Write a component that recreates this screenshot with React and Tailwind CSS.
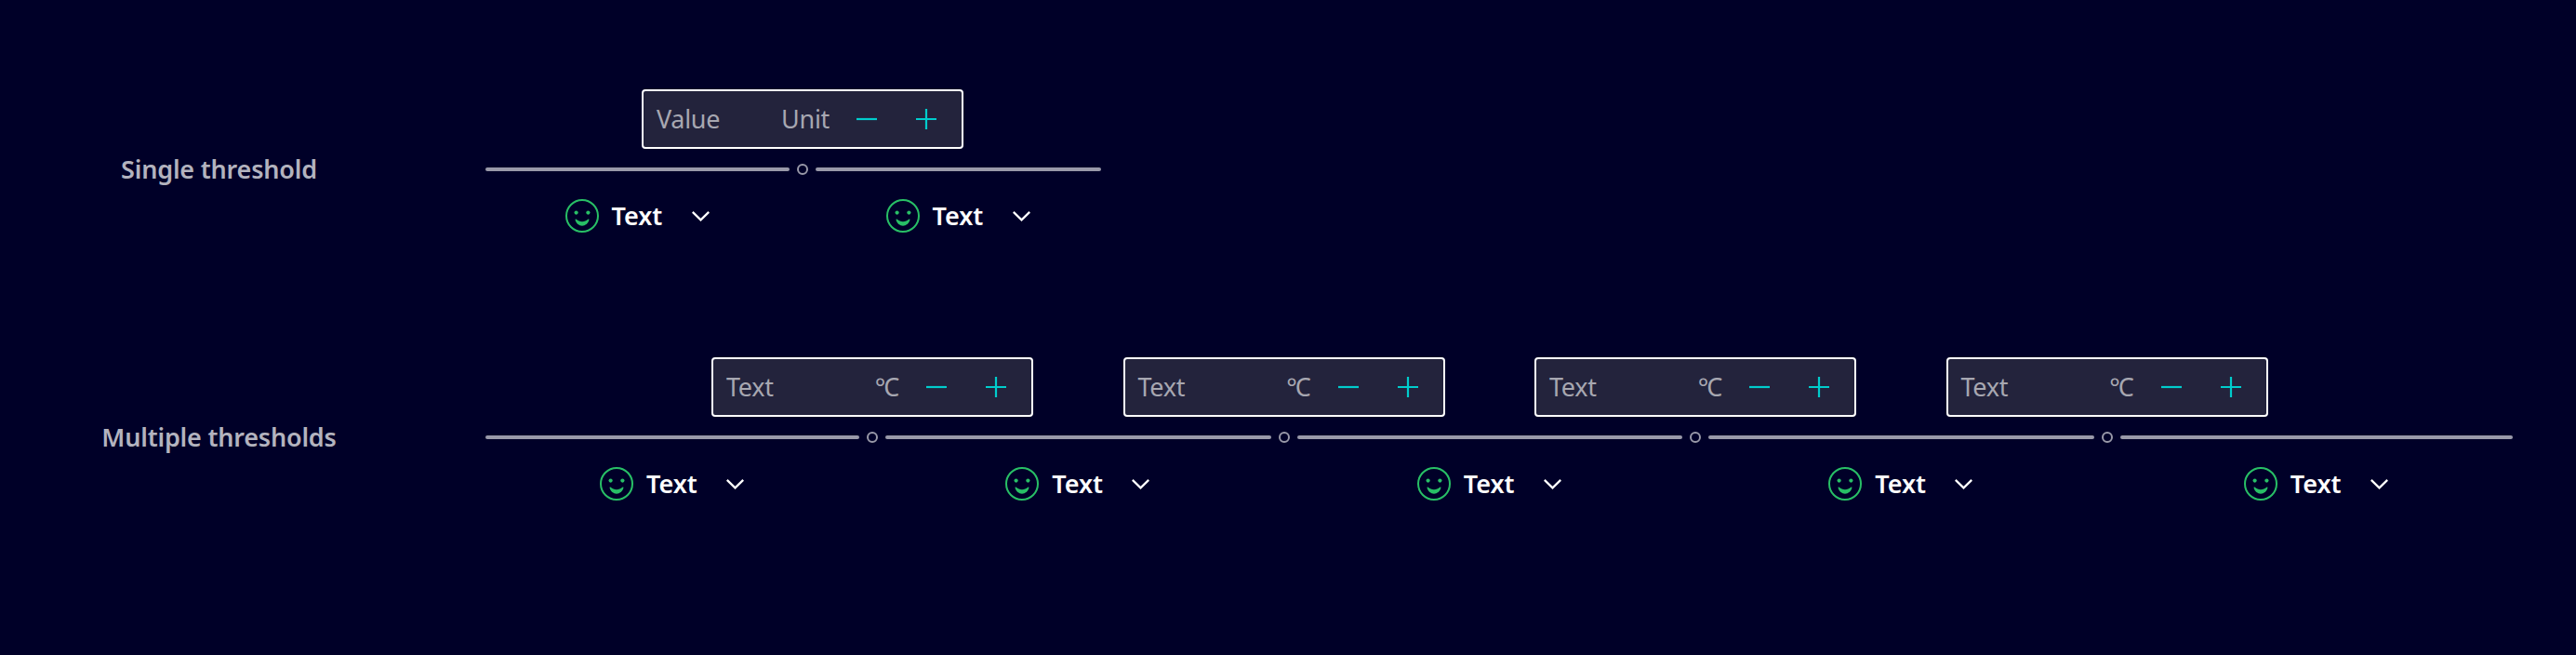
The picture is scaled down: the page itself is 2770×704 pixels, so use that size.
const Minus = () => (
  <svg viewBox="0 0 22 22" className="block size-[22px]" fill="none" stroke="#00cccc" strokeWidth="2.2">
    <path d="M0 11H22" />
  </svg>
);

const Plus = () => (
  <svg viewBox="0 0 22 22" className="block size-[22px]" fill="none" stroke="#00cccc" strokeWidth="2.2">
    <path d="M0 11H22M11 0V22" />
  </svg>
);

const Smiley = () => (
  <svg viewBox="0 0 36 36" className="block size-9 shrink-0" fill="#28bf66">
    <circle cx="18" cy="18" r="17" fill="none" stroke="#28bf66" strokeWidth="2" />
    <circle cx="11.6" cy="14.6" r="2.1" />
    <circle cx="24.4" cy="14.6" r="2.1" />
    <path d="M11.8 21.8C13.5 23.5 15.7 24.2 18 24.2s4.5-.7 6.200-2.400c.7-.6 1.500-.1 1.200.8C24.500 26.200 21.500 28.700 18 28.700S11.500 26.200 10.600 22.600C10.300 21.700 11.100 21.200 11.800 21.800Z" />
  </svg>
);

const Chevron = () => (
  <svg viewBox="0 0 19 11" className="block h-[11px] w-[19px] shrink-0" fill="none" stroke="#fff" strokeWidth="2.3">
    <path d="M0.8 0.9L9.5 9.4L18.2 0.9" />
  </svg>
);

const Dropdown = () => (
  <div className="flex h-9 w-[156px] items-center">
    <Smiley />
    <span className="ml-3.5 w-[86px] text-[27px] leading-9 font-semibold text-white">Text</span>
    <Chevron />
  </div>
);

const NumberField = ({ value, unit }) => (
  <div className="flex h-16 w-[346px] shrink-0 items-center rounded-[4px] border-2 border-white bg-[#23233c] pl-3.5 text-[27px] leading-9 text-[#a7a7b1]">
    <div className="flex w-[186px] justify-between font-normal tracking-[-0.3px]">
      <span>{value}</span>
      {unit === "°C" ? (
        <span>
          <span className="tracking-[-2px]">°</span>C
        </span>
      ) : (
        <span>{unit}</span>
      )}
    </div>
    <div className="ml-[29px] flex gap-[42px]">
      <Minus />
      <Plus />
    </div>
  </div>
);

const Handle = ({ value, unit }) => (
  <div className="flex w-7 shrink-0 flex-col items-center">
    <NumberField value={value} unit={unit} />
    <div className="mt-4 size-3 rounded-full border-2 border-[#9999a9]" />
  </div>
);

const Segment = ({ width }) => (
  <div className={`flex shrink-0 flex-col items-center pt-[84px] ${width}`}>
    <div className="h-1 w-full rounded-[2px] bg-[#9999a9]" />
    <div className="mt-[30px]">
      <Dropdown />
    </div>
  </div>
);

const Row = ({ label, first, widths, value, unit }) => (
  <section className="flex h-[154px] items-start">
    <h2 className="w-[471px] pt-[68px] text-center text-[27px] leading-9 font-semibold tracking-[-0.2px] text-[#b3b3be]">
      {label}
    </h2>
    <div className="ml-[51px] flex items-start">
      <Segment width={first} />
      {widths.map((w, i) => (
        <div key={i} className="flex items-start">
          <Handle value={value} unit={unit} />
          <Segment width={w} />
        </div>
      ))}
    </div>
  </section>
);

export default function App() {
  return (
    <main className="flex h-[704px] w-[2770px] flex-col gap-[134px] overflow-hidden bg-[#000028] pt-24 font-['Noto_Sans',sans-serif]">
      <Row label="Single threshold" first="w-[327px]" widths={["w-[307px]"]} value="Value" unit="Unit" />
      <Row
        label="Multiple thresholds"
        first="w-[402px]"
        widths={["w-[414.5px]", "w-[414.5px]", "w-[414.5px]", "w-[422.5px]"]}
        value="Text"
        unit="°C"
      />
    </main>
  );
}
